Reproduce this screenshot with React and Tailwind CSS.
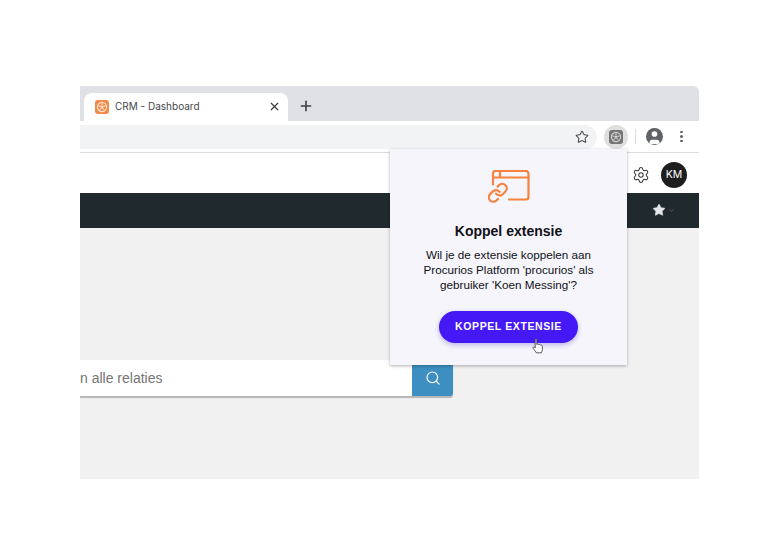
import React from "react";
import { X, Plus, Star, User, Settings, Search, ChevronDown } from "lucide-react";

function Logo({ bg, fg, size }) {
  return (
    <svg width={size} height={size} viewBox="0 0 14 14">
      <rect width="14" height="14" rx="3" fill={bg} />
      <circle cx="7" cy="7" r="4.6" fill="none" stroke={fg} strokeWidth="1.1" />
      <circle cx="7" cy="7" r="1.3" fill={fg} />
      <path d="M7 2.5V5.7M2.7 5.6L5.8 6.6M4.3 10.7L6.2 8M9.7 10.7L7.8 8M11.3 5.6L8.2 6.6" stroke={fg} strokeWidth="1" />
    </svg>
  );
}

function LinkWindowIcon() {
  return (
    <svg width="42" height="34" viewBox="0 0 42 34" fill="none" stroke="#f5833f" strokeWidth="2.2" strokeLinecap="round" strokeLinejoin="round">
      <path d="M5 14.500V3.500A2.500 2.500 0 0 1 7.500 1H38A2.500 2.500 0 0 1 40.500 3.500V27A2.500 2.500 0 0 1 38 29.500H21" />
      <path d="M5 7.500H40.500M12 1.500V7.500" />
      <g transform="translate(-1 12) scale(0.9)" strokeWidth="2.5">
        <path d="M10 13a5 5 0 0 0 7.540.540l3-3a5 5 0 0 0-7.070-7.070l-1.720 1.710" />
        <path d="M14 11a5 5 0 0 0-7.540-.540l-3 3a5 5 0 0 0 7.070 7.070l1.710-1.710" />
      </g>
    </svg>
  );
}

function Cursor() {
  return (
    <svg width="12" height="16" viewBox="0 0 12 16" fill="#fff" stroke="#333" strokeWidth="0.8" strokeLinejoin="round">
      <path d="M3.200 1.500C3.200.5 4.800.5 4.800 1.500V6.500C5.500 5.900 6.500 6 6.700 6.700 7.400 6.300 8.300 6.500 8.500 7.200 9.300 6.900 10.400 7.300 10.400 8.300V11.500C10.400 13 9.700 13.800 9.300 14.800H4.300C3.800 13.500 2.500 12.300 1.200 10.300.6 9.300 1.700 8.400 2.500 9.200L3.200 10Z" />
    </svg>
  );
}

export default function App() {
  return (
    <div className="h-[550px] w-[780px] overflow-hidden bg-white pl-20 pt-[86px] font-['Liberation_Sans',sans-serif]">
      <div className="relative flex h-[393px] w-[619px] flex-col overflow-hidden rounded-tr-md bg-[#f1f1f2]">
        {/* Tab strip */}
        <div className="flex h-[35px] shrink-0 items-end bg-[#dfe1e6]">
          <div className="ml-[4px] flex h-[28px] w-[204px] items-center rounded-t-lg bg-white pb-[1px] pl-[11px] pr-[7px] font-['Inter',sans-serif]">
            <Logo bg="#f5894a" fg="#fde3d0" size={14} />
            <span className="ml-[6px] flex-1 text-[10px] text-[#45474b]">CRM - Dashboard</span>
            <X size={13} strokeWidth={2.200} className="text-[#3c3f43]" />
          </div>
          <Plus size={16} strokeWidth={2.400} className="mb-[7px] ml-[10px] text-[#3c3f43]" />
        </div>

        {/* Toolbar */}
        <div className="flex h-[32px] shrink-0 items-center border-b border-[#dcdde0] bg-white">
          <div className="flex h-[24px] w-[517px] items-center justify-end rounded-r-full bg-[#f1f3f5] pr-[8px]">
            <Star size={14} strokeWidth={1.800} className="text-[#4b4d51]" />
          </div>
          <div className="ml-[7px] flex h-[24px] w-[24px] items-center justify-center rounded-full bg-[#dfdfdf]">
            <Logo bg="#757575" fg="#cfcfcf" size={14} />
          </div>
          <div className="ml-[7px] h-[15px] w-px bg-[#dcdde0]" />
          <div className="ml-[10px] flex h-[17px] w-[17px] items-center justify-center overflow-hidden rounded-full bg-[#5f6368]">
            <User size={17} strokeWidth={0} fill="#fff" className="mt-[1px]" />
          </div>
          <div className="ml-[17px] flex flex-col gap-[2px]">
            <span className="h-[2.500px] w-[2.500px] rounded-full bg-[#5f6368]" />
            <span className="h-[2.500px] w-[2.500px] rounded-full bg-[#5f6368]" />
            <span className="h-[2.500px] w-[2.500px] rounded-full bg-[#5f6368]" />
          </div>
        </div>

        {/* Page header */}
        <div className="flex h-[40px] shrink-0 items-center justify-end gap-[11px] bg-white pr-[12px] pt-[3px]">
          <Settings size={18} strokeWidth={1.400} className="text-[#3a3a3a]" />
          <div className="flex h-[26px] w-[26px] items-center justify-center rounded-full bg-[#1e1e1e] font-['Inter',sans-serif] text-[10.500px] text-white">KM</div>
        </div>

        {/* Nav */}
        <div className="flex h-[35px] shrink-0 items-center justify-end gap-[2px] bg-[#20292d] pb-[1px] pr-[24px]">
          <Star size={14} strokeWidth={1} fill="#e4e6e7" className="text-[#e4e6e7]" />
          <ChevronDown size={7} strokeWidth={2} className="text-[#778085]" />
        </div>

        {/* Content */}
        <div className="flex-1 pt-[132px]">
          <div className="flex h-[36px] w-[373px] rounded-br-[3px] shadow-[0_1.500px_1px_rgba(0,0,0,0.25)]">
            <div className="flex flex-1 items-center bg-white pt-[1px] text-[14px] text-[#757575]">n alle relaties</div>
            <div className="flex w-[41px] items-center justify-center rounded-br-[3px] bg-[#3d8fc1]">
              <Search size={16} strokeWidth={1.800} className="text-white" />
            </div>
          </div>
        </div>

        {/* Extension popup */}
        <div className="absolute left-[310px] top-[63px] flex h-[216px] w-[237px] flex-col items-center bg-[#f5f5fb] pt-[21px] shadow-[0_1px_3px_rgba(0,0,0,0.3)]">
          <LinkWindowIcon />
          <h2 className="mt-[17px] text-[14px] font-bold leading-[20px] text-[#111116]">Koppel extensie</h2>
          <p className="mt-[6px] w-[200px] text-center text-[11.700px] leading-[15px] text-[#111116]">
            Wil je de extensie koppelen aan Procurios Platform 'procurios' als gebruiker 'Koen Messing'?
          </p>
          <div className="relative mt-[19px]">
            <div className="flex h-[32px] w-[139px] items-center justify-center rounded-full bg-[#4419f5] text-[10.500px] font-bold tracking-[0.6px] text-white shadow-[0_2px_5px_rgba(60,30,200,0.3)]">
              KOPPEL EXTENSIE
            </div>
            <div className="absolute left-[93px] top-[27px]">
              <Cursor />
            </div>
          </div>
        </div>
      </div>
    </div>
  );
}
